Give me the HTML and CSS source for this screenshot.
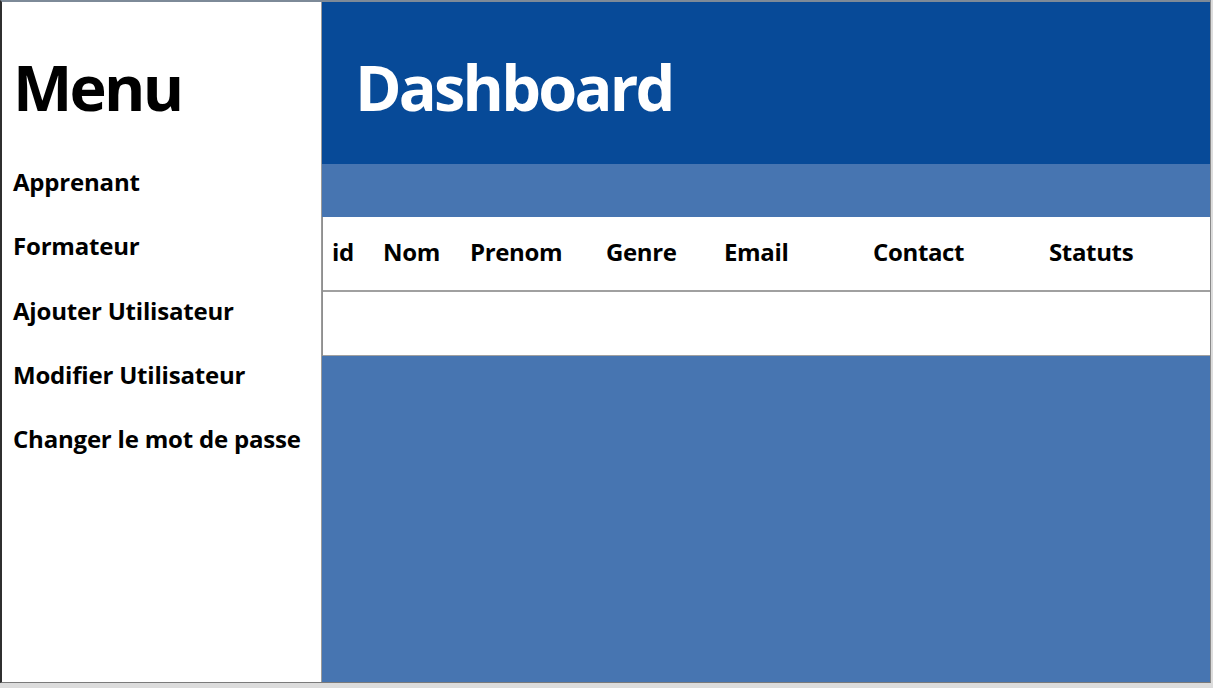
FILE: index.html
```html
<!DOCTYPE html>
<html lang="fr">
<head>
<meta charset="utf-8">
<title>Dashboard</title>
<link rel="stylesheet" href="styles.css">
</head>
<body>
<div class="window">
  <aside class="sidebar">
    <h1 class="menu-title">Menu</h1>
    <nav class="menu">
      <div class="menu-item">Apprenant</div>
      <div class="menu-item">Formateur</div>
      <div class="menu-item">Ajouter Utilisateur</div>
      <div class="menu-item">Modifier Utilisateur</div>
      <div class="menu-item">Changer le mot de passe</div>
    </nav>
  </aside>
  <main class="main">
    <header class="header">
      <h1 class="dash-title">Dashboard</h1>
    </header>
    <div class="band"></div>
    <div class="table">
      <div class="thead">
        <div class="th">id</div>
        <div class="th">Nom</div>
        <div class="th">Prenom</div>
        <div class="th">Genre</div>
        <div class="th">Email</div>
        <div class="th">Contact</div>
        <div class="th">Statuts</div>
      </div>
      <div class="trow"></div>
    </div>
    <div class="rest"></div>
  </main>
</div>
<div class="below"></div>
</body>
</html>
```

FILE: styles.css
```css
html, body {
  margin: 0;
  padding: 0;
  background: #dcdcdc;
  height: 688px;
  overflow: hidden;
  font-family: "Open Sans", "Noto Sans", sans-serif;
}

.window {
  width: 1208px;
  height: 680px;
  display: flex;
  border-left: 2px solid #2f2f2f;
  border-top: 2px solid #7d8a98;
  border-right: 1px solid #8a8a8a;
  border-bottom: 1px solid #7a7a7a;
  background: #ffffff;
}

.sidebar {
  flex: none;
  width: 320px;
  background: #ffffff;
  border-right: 1px solid #9a9a9a;
  padding-left: 11px;
  box-sizing: border-box;
}

.menu-title {
  margin: 0;
  padding-top: 41px;
  font-size: 63px;
  line-height: 88px;
  font-weight: 700;
  letter-spacing: -2.8px;
  color: #000;
}

.menu {
  display: flex;
  flex-direction: column;
  padding-top: 36px;
}

.menu-item {
  font-size: 24px;
  font-weight: 700;
  line-height: 30px;
  height: 64.3px;
  letter-spacing: -0.2px;
  color: #000;
}

.main {
  flex: 1;
  display: flex;
  flex-direction: column;
  background: #4775b1;
}

.header {
  height: 162px;
  background: #074a98;
  padding-left: 33px;
  box-sizing: border-box;
}

.dash-title {
  margin: 0;
  padding-top: 41px;
  font-size: 63px;
  line-height: 88px;
  font-weight: 700;
  letter-spacing: -2.8px;
  color: #ffffff;
}

.band {
  height: 53px;
}

.table {
  background: #ffffff;
  border-left: 1px solid #8f8f8f;
}

.thead {
  height: 75px;
  display: grid;
  grid-template-columns: 51px 87px 136px 118px 149px 176px 1fr;
  align-items: center;
  padding-left: 9px;
  padding-bottom: 4px;
  border-bottom: 2px solid #a0a0a0;
  box-sizing: border-box;
}

.th {
  font-size: 24px;
  font-weight: 700;
  letter-spacing: -0.35px;
  color: #000;
  line-height: 30px;
}

.trow {
  height: 64px;
  border-bottom: 1px solid #a0a0a0;
  box-sizing: border-box;
}

.rest {
  flex: 1;
}

.below {
  height: 5px;
}
```
